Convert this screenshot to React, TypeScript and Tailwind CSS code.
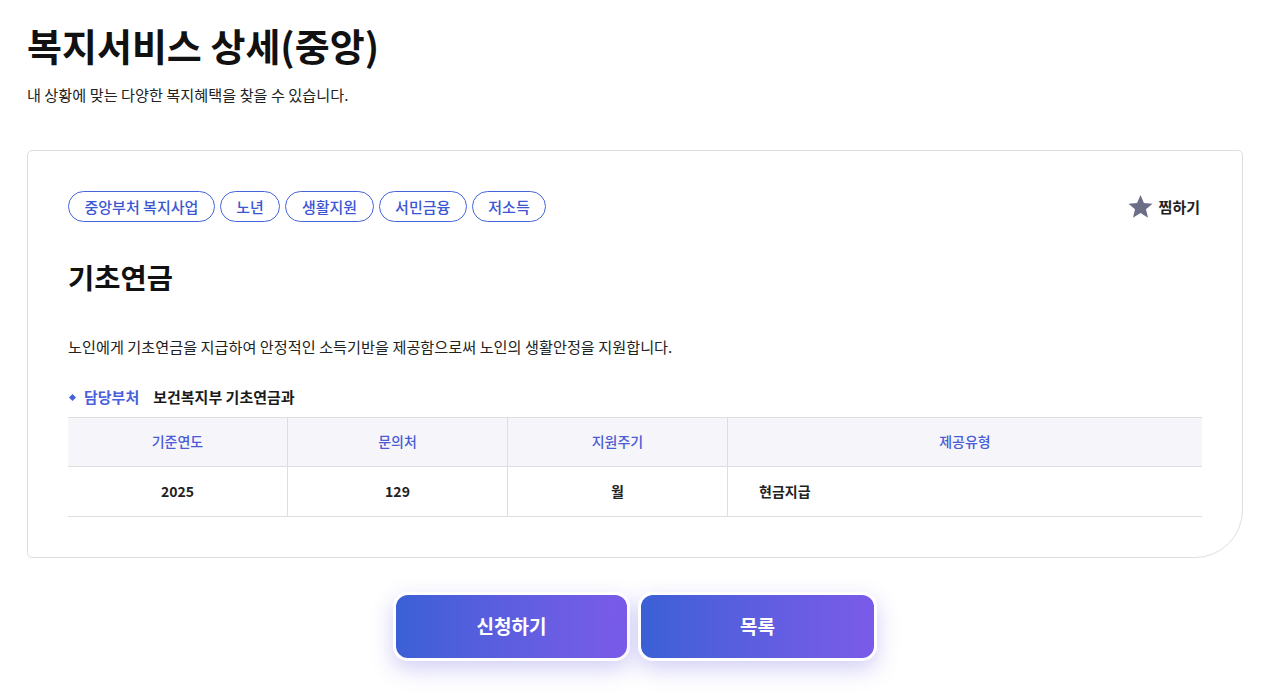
import React from "react";

const font = { fontFamily: '"Noto Sans CJK KR", "Noto Sans", sans-serif' };

const tags = ["중앙부처 복지사업", "노년", "생활지원", "서민금융", "저소득"];

export default function App() {
  return (
    <div className="min-h-[697px] bg-white pl-[27px] pr-[32px] text-[#111]" style={font}>
      <h1 className="pt-[22px] text-[38px] font-bold leading-[1.2] text-[#111]">
        복지서비스 상세(중앙)
      </h1>
      <p className="mt-[15px] text-[15.2px] leading-[1.5] text-[#222]">
        내 상황에 맞는 다양한 복지혜택을 찾을 수 있습니다.
      </p>

      <div className="mt-[45px] rounded-[5px] rounded-br-[48px] border border-[#dedede] px-[40px] pb-[40px] pt-[40px]">
        <div className="flex items-center justify-between">
          <div className="flex gap-[5px]">
            {tags.map((t) => (
              <span
                key={t}
                className="flex h-[31px] items-center rounded-full border border-[#4565dc] px-[15.5px] text-[15px] font-medium text-[#3c56d4]"
              >
                {t}
              </span>
            ))}
          </div>
          <button className="flex items-center gap-[5px] pr-[2px] text-[15px] font-bold text-[#222]">
            <svg width="27" height="27" viewBox="0 0 24 24" className="fill-[#6b6e86]">
              <path d="M12 1.8l3.05 7.05 7.65.6-5.85 4.95 1.85 7.5L12 17.85 5.3 21.9l1.85-7.5L1.3 9.45l7.65-.6z" />
            </svg>
            찜하기
          </button>
        </div>

        <h2 className="mt-[36px] text-[28.5px] font-bold leading-[1.3] text-[#111]">
          기초연금
        </h2>

        <p className="mt-[40px] text-[15.2px] leading-[1.5] text-[#222]">
          노인에게 기초연금을 지급하여 안정적인 소득기반을 제공함으로써 노인의 생활안정을 지원합니다.
        </p>

        <div className="mt-[28px] flex items-center text-[15px] leading-[1.5]">
          <span className="ml-[2px] mr-[9px] h-[5px] w-[5px] rotate-45 bg-[#4461dc]" />
          <span className="font-semibold text-[#4a5fdc]">담당부처</span>
          <span className="ml-[14px] font-bold text-[#1a1a1a]">보건복지부 기초연금과</span>
        </div>

        <div className="mt-[8px] border-y border-[#dedede]">
          <div className="grid grid-cols-[220px_220px_220px_1fr] bg-[#f6f6fa] text-[14px] font-medium text-[#4a5bd6]">
            <div className="flex h-[48px] items-center justify-center border-r border-[#dedede]">기준연도</div>
            <div className="flex h-[48px] items-center justify-center border-r border-[#dedede]">문의처</div>
            <div className="flex h-[48px] items-center justify-center border-r border-[#dedede]">지원주기</div>
            <div className="flex h-[48px] items-center justify-center">제공유형</div>
          </div>
          <div className="grid grid-cols-[220px_220px_220px_1fr] border-t border-[#dedede] text-[14px] font-bold text-[#222]">
            <div className="flex h-[49px] items-center justify-center border-r border-[#dedede]">2025</div>
            <div className="flex h-[49px] items-center justify-center border-r border-[#dedede]">129</div>
            <div className="flex h-[49px] items-center justify-center border-r border-[#dedede]">월</div>
            <div className="flex h-[49px] items-center pl-[31px]">현금지급</div>
          </div>
        </div>
      </div>

      <div className="mt-[34px] flex justify-center gap-[8px]">
        <button className="flex h-[69px] w-[237px] items-center justify-center rounded-[15px] border-[3px] border-white bg-gradient-to-r from-[#3a60d6] to-[#7a5be9] text-[19px] font-bold text-white shadow-[0_8px_22px_rgba(90,80,220,0.28)]">
          신청하기
        </button>
        <button className="flex h-[69px] w-[239px] items-center justify-center rounded-[15px] border-[3px] border-white bg-gradient-to-r from-[#3a60d6] to-[#7a5be9] text-[19px] font-bold text-white shadow-[0_8px_22px_rgba(90,80,220,0.28)]">
          목록
        </button>
      </div>
    </div>
  );
}
